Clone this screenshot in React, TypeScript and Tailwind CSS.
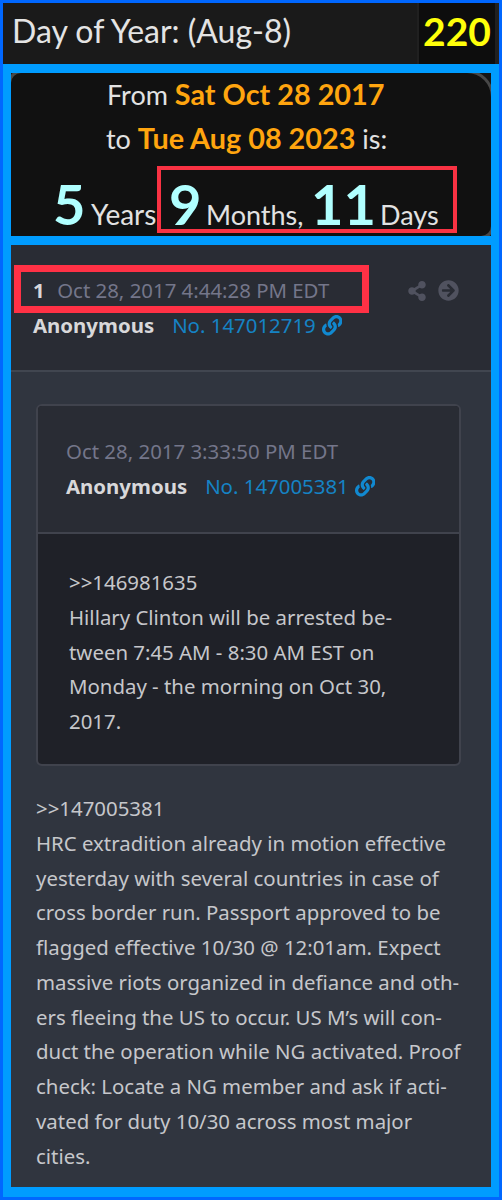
import React from "react";
import { FaLink, FaShareAlt, FaArrowCircleRight } from "react-icons/fa";

const quoteLines = [
  ">>146981635",
  "Hillary Clinton will be arrested be-",
  "tween 7:45 AM - 8:30 AM EST on",
  "Monday - the morning on Oct 30,",
  "2017.",
];

const postLines = [
  ">>147005381",
  "HRC extradition already in motion effective",
  "yesterday with several countries in case of",
  "cross border run. Passport approved to be",
  "flagged effective 10/30 @ 12:01am. Expect",
  "massive riots organized in defiance and oth-",
  "ers fleeing the US to occur. US M’s will con-",
  "duct the operation while NG activated. Proof",
  "check: Locate a NG member and ask if acti-",
  "vated for duty 10/30 across most major",
  "cities.",
];

function Lines({ lines }: { lines: string[] }) {
  return (
    <>
      {lines.map((line) => (
        <div key={line} className="h-[34.75px] whitespace-nowrap">
          {line}
        </div>
      ))}
    </>
  );
}

function Author({ no }: { no: string }) {
  return (
    <div className="flex h-[35px] items-center whitespace-nowrap">
      <span className="font-bold text-[#d8d8da]">Anonymous</span>
      <span className="ml-[18px] text-[#1583c4]">No. {no}</span>
      <FaLink className="ml-[6px] size-[20.5px] text-[#1189d0]" />
    </div>
  );
}

function DayBar() {
  return (
    <header className="flex h-[61px] bg-[#1a1a1a] font-['Lato',sans-serif]">
      <div className="flex-1 whitespace-nowrap pl-[9px] text-[32px] leading-[56px] text-[#e4e4e4]">
        Day of Year: (Aug-8)
      </div>
      <div className="w-[82px] border-l-2 border-r-4 border-[#202020] bg-[#0d0d0d] text-center text-[39px] font-bold leading-[56px] text-[#ffff0a]">
        220
      </div>
    </header>
  );
}

function DateSpan() {
  return (
    <section className="relative h-[163px] overflow-hidden bg-[#151515] font-['Lato',sans-serif] text-[27px] text-[#e2e2e2]">
      <div className="h-full rounded-tl-[10px] rounded-tr-[24px] rounded-br-[10px] bg-[#111] whitespace-nowrap shadow-[0_0_0_3px_#484848]">
        <div className="h-11 pl-[96px] leading-[44px]">
          From <b className="text-[28.8px] font-bold leading-none text-[#ffa50f]">Sat Oct 28 2017</b>
        </div>
        <div className="h-11 pl-[95px] leading-[44px]">
          to <b className="text-[28.8px] font-bold leading-none text-[#ffa50f]">Tue Aug 08 2023</b> is:
        </div>
        <div className="flex h-[75px] items-baseline pl-[42px] leading-[86px]">
          <b className="w-[38px] text-[56px] font-bold text-[#b0ffff]">5</b>
          <span className="w-[78px] text-[28px]">Years</span>
          <b className="w-[37px] text-[56px] font-bold text-[#b0ffff]">9</b>
          <span className="w-[105px]">Months,</span>
          <b className="w-[69px] text-[56px] font-bold text-[#b0ffff]">11</b>
          <span>Days</span>
        </div>
      </div>
      <div className="absolute left-[146px] top-[92.5px] h-[67px] w-[300px] border-[4.5px] border-[#f93243]" />
    </section>
  );
}

function Post() {
  return (
    <article className="relative h-[942px] bg-[#30353f] font-['Noto_Sans',sans-serif] text-[20.4px] leading-[34.75px] text-[#c6c7cb]">
      <div className="h-[127px] border-b-2 border-[#414650] bg-[#292c34] pl-[22px] pt-[28px]">
        <div className="flex h-[35px] items-center whitespace-nowrap">
          <b className="text-[#d8d8da]">1</b>
          <span className="ml-[12.5px] text-[#74768a]">Oct 28, 2017 4:44:28 PM EDT</span>
          <FaShareAlt className="ml-auto size-[20px] text-[#50525f]" />
          <FaArrowCircleRight className="ml-[11px] mr-[32.5px] size-[21px] text-[#50525f]" />
        </div>
        <Author no="147012719" />
      </div>

      <div className="ml-[25px] mr-[30px] mt-[32px] h-[362px] overflow-hidden rounded-[6px] border-2 border-[#40434d] bg-[#1f2128]">
        <div className="h-[128px] border-b-2 border-[#40434d] bg-[#292c34] pl-[28px] pt-[28px]">
          <div className="h-[35px] whitespace-nowrap text-[#74768a]">Oct 28, 2017 3:33:50 PM EDT</div>
          <Author no="147005381" />
        </div>
        <div className="pl-[31px] pt-[31px]">
          <Lines lines={quoteLines} />
        </div>
      </div>

      <div className="pl-[25px] pt-[25px]">
        <Lines lines={postLines} />
      </div>
      <div className="absolute left-[3px] top-[20px] h-[48px] w-[355px] border-[7px] border-[#ff3145]" />
    </article>
  );
}

export default function App() {
  return (
    <div className="h-[1200px] w-[502px] overflow-hidden border-[3px] border-[#0067ff]">
      <DayBar />
      <main className="flex h-[1133px] flex-col gap-[9px] bg-[#009cff] px-2 pt-[9px]">
        <DateSpan />
        <Post />
      </main>
    </div>
  );
}
